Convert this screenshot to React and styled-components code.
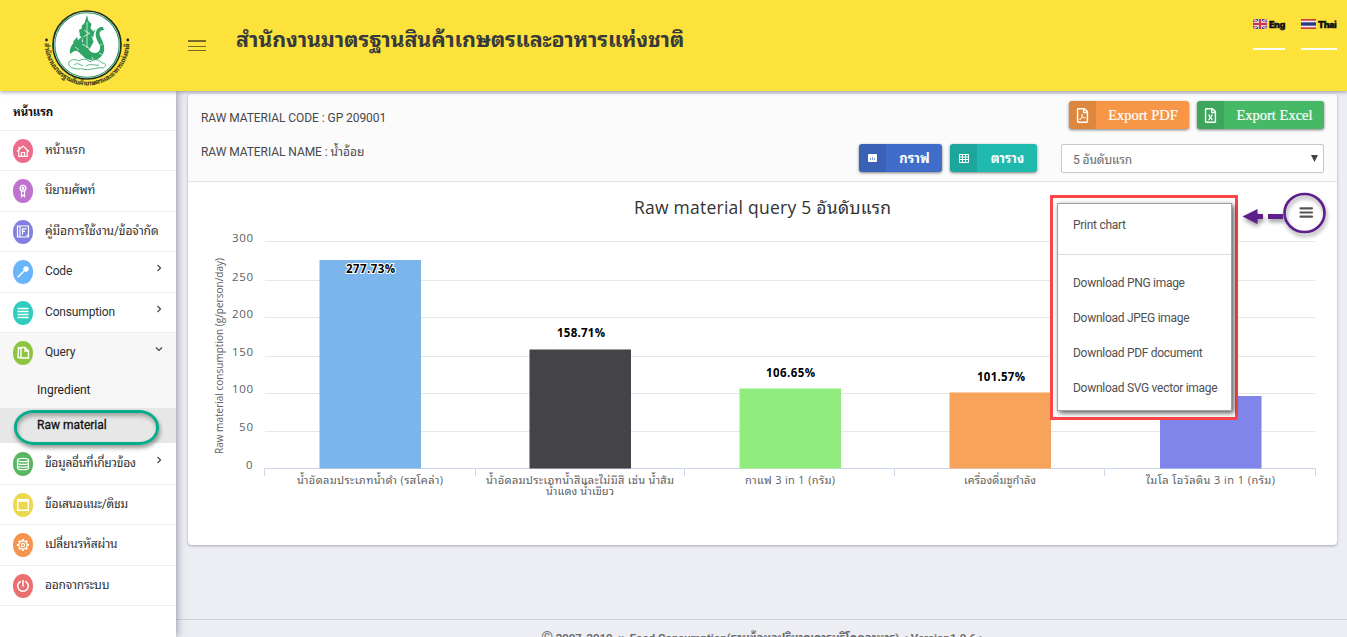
import React from 'react';
import styled, { createGlobalStyle, css } from 'styled-components';
import { FaRegFilePdf, FaRegFileExcel } from 'react-icons/fa';

const thai = '"Noto Sans Thai Looped", Loma, Garuda, Waree, "Noto Serif Thai", "Noto Sans Thai"';

const Global = createGlobalStyle`
  * { box-sizing: border-box; }
  html, body, #root { height: 100%; margin: 0; }
  body { overflow: hidden; background: #edeef4; color: #333; font: 13px Roboto, ${thai}, sans-serif; }
`;

const Page = styled.div`
  height: 637px;
  display: flex;
  flex-direction: column;
  overflow: hidden;
`;
const Header = styled.header`
  flex: none;
  height: 91px;
  display: flex;
  background: #fde23b;
  box-shadow: 0 1px 4px rgba(60, 60, 90, 0.5);
  position: relative;
  z-index: 2;
`;
const LogoBox = styled.div`
  width: 176px;
  padding-left: 37px;
`;
const Burger = styled.div`
  width: 18px;
  height: 11px;
  margin: 40px 0 0 12px;
  display: flex;
  flex-direction: column;
  justify-content: space-between;
`;
const BurgerLine = styled.span`
  height: ${(p) => (p.$thick ? 2 : 1)}px;
  background: #756b22;
`;
const Title = styled.h1`
  margin: 25px 0 0 30px;
  font-size: 21.5px;
  line-height: 30px;
  font-weight: 700;
  letter-spacing: -0.19px;
  white-space: nowrap;
  color: #373a3c;
`;
const Langs = styled.nav`
  margin-left: auto;
  padding: 17px 10px 0 0;
  display: flex;
  gap: 16px;
`;
const Lang = styled.div`
  width: ${(p) => p.$w}px;
  height: 33px;
  display: flex;
  gap: 2px;
  align-items: flex-start;
  border-bottom: 2px solid #fff;
  font: 900 9px/15px Inter, sans-serif;
  color: #111;
  letter-spacing: -0.45px;
  -webkit-text-stroke: 0.4px #111;
  svg { flex: none; margin-top: 2px; }
`;

const Body = styled.div`
  flex: 1;
  min-height: 0;
  display: flex;
`;
const Sidebar = styled.aside`
  width: 176px;
  flex: none;
  background: #fff;
  box-shadow: 1px 0 8px rgba(60, 60, 90, 0.5);
  z-index: 1;
`;
const SideHead = styled.div`
  height: 40px;
  padding: 3px 0 0 13px;
  line-height: 36px;
  font-size: 11.5px;
  font-weight: 700;
  letter-spacing: -0.2px;
  color: #111;
  border-bottom: 1px solid #efefef;
`;
const SideItem = styled.div`
  height: ${(p) => p.$h}px;
  padding: 0 13px;
  display: flex;
  align-items: center;
  background: ${(p) => (p.$open ? '#f7f7f7' : 'none')};
  border-bottom: 1px solid ${(p) => (p.$open ? '#f7f7f7' : '#efefef')};
`;
const Badge = styled.span`
  width: 20px;
  height: 24px;
  flex: none;
  margin-right: 12px;
  border-radius: 10px / 11px;
  background: ${(p) => p.$c};
  display: flex;
  align-items: center;
  justify-content: center;
`;
const SideLabel = styled.span`
  flex: 1;
  font-size: 12px;
  letter-spacing: ${(p) => p.$ls || -0.1}px;
  line-height: 20px;
  padding-bottom: 2px;
  white-space: nowrap;
  color: #2c2f33;
`;
const Chevron = styled.svg`
  width: 8px;
  height: 8px;
  margin: -8px 0 0 0;
  fill: none;
  stroke: #444;
  stroke-width: 1.2;
`;
const SubItem = styled.div`
  position: relative;
  height: 35px;
  padding-left: 37px;
  font-size: 12px;
  line-height: 35px;
  color: #222;
  background: #f7f7f7;
  ${(p) => p.$active && css`
    background: #e7e7e7;
    color: #111;
    -webkit-text-stroke: 0.3px #111;
  `}
`;
const ActiveRing = styled.span`
  position: absolute;
  left: 14px;
  top: 2px;
  width: 145px;
  height: 35px;
  border: 3px solid #06ab8b;
  border-radius: 20px / 17px;
  box-shadow: 1px 3px 4px rgba(0, 0, 0, 0.4), inset 1px 3px 4px rgba(0, 0, 0, 0.3);
  z-index: 2;
`;

const Main = styled.main`
  flex: 1;
  min-width: 0;
  display: flex;
  flex-direction: column;
`;
const Panel = styled.section`
  height: 451px;
  margin: 3px 10px 0 12px;
  background: #fff;
  border-radius: 4px;
  box-shadow: 0 1px 3px rgba(60, 60, 80, 0.4);
`;
const PanelHead = styled.div`
  height: 88px;
  padding: 7px 13px 0;
  display: flex;
  justify-content: space-between;
  background: #fbfbfb;
  border-radius: 4px 4px 0 0;
  border-bottom: 1px solid #e3e3e6;
`;
const Facts = styled.div`
  font-size: 12px;
  line-height: 34px;
  letter-spacing: -0.06px;
  color: #484848;
`;
const Tools = styled.div`
  display: flex;
  flex-direction: column;
  align-items: flex-end;
  gap: 15px;
`;
const ToolRow = styled.div`
  display: flex;
  gap: 8px;
`;
const Button = styled.button`
  width: ${(p) => p.$w}px;
  height: 28px;
  padding: 0;
  display: flex;
  border: 0;
  border-radius: 3px;
  overflow: hidden;
  background: ${(p) => p.$c};
  color: #fff;
  font: ${(p) => (p.$serif ? '14.5px "Liberation Serif", serif' : `bold 13px Roboto, ${thai}, sans-serif`)};
  line-height: ${(p) => (p.$serif ? 28 : 29)}px;
  box-shadow: 0 1px 3px rgba(0, 0, 0, 0.5);
  ${(p) => p.$serif && '-webkit-text-stroke: 0.2px #fff;'}
`;
const ButtonIcon = styled.span`
  width: 27px;
  height: 28px;
  display: flex;
  align-items: center;
  justify-content: center;
  background: rgba(0, 0, 0, 0.1);
`;
const ButtonText = styled.span`
  flex: 1;
  padding-left: 1px;
  text-align: center;
  white-space: nowrap;
`;
const Select = styled.div`
  width: 263px;
  height: 29px;
  margin-left: 16px;
  padding: 0 5px 0 11px;
  display: flex;
  justify-content: space-between;
  background: #fff;
  border: 1px solid #c8c8c8;
  border-radius: 2px;
  font-size: 12px;
  line-height: 30px;
  letter-spacing: -0.1px;
  color: #666;
  svg { margin-top: 10px; }
`;
const ChartArea = styled.div`
  position: relative;
  height: 363px;
`;
const Highlight = styled.div`
  position: absolute;
  left: 862px;
  top: 13px;
  width: 188px;
  height: 225px;
  padding: 5px 3px 5px 4px;
  border: 3px solid #fb4547;
  background: #fff;
`;
const Menu = styled.div`
  height: 208px;
  border: 1px solid #a0a0a0;
  background: #fff;
  box-shadow: 2px 2px 5px rgba(0, 0, 0, 0.65);
  padding-top: 3px;
`;
const MenuItem = styled.div`
  height: 35px;
  padding-left: 15px;
  font-size: 12px;
  line-height: 36px;
  letter-spacing: -0.28px;
  white-space: nowrap;
  color: #505050;
`;
const MenuRule = styled.div`
  height: 1px;
  margin: 12px 0 10px;
  background: #ddd;
`;
const Footer = styled.footer`
  margin-top: auto;
  height: 18px;
  padding: 7px 0 0 3px;
  overflow: hidden;
  border-top: 1px solid #d2d3da;
  text-align: center;
  font-size: 11.4px;
  font-weight: 700;
  line-height: 20px;
  white-space: nowrap;
  color: #6b6b6b;
`;
const Copy = styled.span`
  font-size: 15px;
  font-weight: 400;
`;

const Logo = () => (
  <svg width="100" height="91" viewBox="37 0 100 91">
    <circle cx="87" cy="45" r="34" fill="#fff" stroke="#24301f" strokeWidth="1.7" />
    <circle cx="87" cy="45" r="32.2" fill="none" stroke="#26965a" strokeWidth="1.1" />
    <g fill="#2fa565">
      <path d="M87 15l1.500 6 3 3-1 4 3 4-2 4 2 6-4 7-6-4-1-6-3-4 3-5-1-4 3-3z" />
      <path d="M70 54c-1-6 3-13 9-13 6 0 8 7 12 11 4 2 8 1 9-3 1-4-3-7-4-12-1-5 1-11 7-10l1 3c-4 0-5 3-4 6 3 6 6 12 3 18-3 6-11 8-18 4-4-3-7-8-10-7-2 0-3 2-5 3z" />
      <path d="M73 42l4-5 1 3 4-3v6l-6 4zM79 30l5-3-2 6 3 4-5-2zM95 29l-4 5 2 4z" />
    </g>
    <path d="M87 22v26M84 30l6 4M83 37l7-4M82 44l7 4M75 47l4 3M99 46l3-2M99 53l4 2M92 57l1 3" stroke="#fff" strokeWidth=".7" />
    <path d="M69 62c3-3 7-3 10-1 4-3 8-2 11 1 5-4 10-2 12 1 4 0 5 3 1 5-4-1-8 1-12 1-5 2-8-1-12 0-5 0-12-2-10-7zM74 65c4-3 6 0 9 1M86 66c5-3 9 0 13-1" fill="none" stroke="#55b581" strokeWidth="1" />
    <path id="logo-arc" d="M44.500 40v2a42.500 43.500 0 0 0 85 0v-2" fill="none" />
    <text fontFamily={`Roboto, ${thai}, sans-serif`} fontSize="6.9" fontWeight="700" fill="#3b3812">
      <textPath href="#logo-arc" startOffset="3" textLength="132">สำนักงานมาตรฐานสินค้าเกษตรและอาหารแห่งชาติ</textPath>
    </text>
    <circle cx="46.500" cy="40" r="1.4" fill="#222" />
    <circle cx="127.800" cy="40" r="1.4" fill="#222" />
  </svg>
);

const FlagUK = () => (
  <svg width="14" height="10" viewBox="0 0 14 10">
    <path fill="#35498c" d="M0 0h14v10H0z" />
    <path d="M0 0l14 10M14 0L0 10" stroke="#e8dfe6" strokeWidth="2.2" />
    <path d="M0 0l14 10M14 0L0 10" stroke="#d94450" strokeWidth=".8" />
    <path d="M7 0v10M0 5h14" stroke="#f3e6ea" strokeWidth="3.4" />
    <path d="M7 0v10M0 5h14" stroke="#d33444" strokeWidth="2" />
  </svg>
);
const FlagTH = () => (
  <svg width="15" height="10" viewBox="0 0 15 10">
    <path fill="#cf3b46" d="M0 0h15v10H0z" />
    <path fill="#f2f2f5" d="M0 1.700h15v6.600H0z" />
    <path fill="#2c3a86" d="M0 3.300h15v3.400H0z" />
  </svg>
);

const glyphs = {
  home: <path d="M1 7.500L7 2l6 5.500M2.800 6.500V12.300h8.400V6.500M5.500 12V8.500h3V12M3 5V2.500" />,
  medal: <><circle cx="7" cy="4.300" r="2.900" /><circle cx="7" cy="4.300" r="1" /><path d="M5.500 7v5.500L7 11l1.500 1.500V7" /></>,
  book: <path d="M1.500 1h11v11h-11zM4 1v11M6.500 9.500V3.800h4M6.500 6.300h2.500M10.500 10.300h1.500" />,
  wand: <path strokeWidth="1.500" d="M1.500 12.500l7-7M10 1v6M7 4h6M8 2l4 4M12 2L8 6" />,
  menu: <path strokeWidth="1.700" d="M1.500 2.500h11M1.500 5.500h11M1.500 8.500h11M1.500 11.500h11" />,
  files: <path strokeWidth="1.400" d="M5 1.500h4l3.500 3.500v7H5zM9 1.500V5h3.500M5 3L2.500 1.500l-.5 10L5 12" />,
  db: <><ellipse cx="7" cy="3" rx="5.500" ry="1.700" /><path d="M1.500 3v8c0 2.300 11 2.300 11 0V3M1.500 5.700c0 2.300 11 2.300 11 0M1.500 8.400c0 2.300 11 2.300 11 0" /></>,
  note: <path strokeWidth="1.500" d="M1.700 1.700h10.600v10.600H1.700zM1.700 2.800h10.600M4.500 1v3M7 1v3M9.500 1v3" />,
  gear: <><circle cx="7" cy="7" r="4.200" /><circle cx="7" cy="7" r="1.600" /><path strokeWidth="2" d="M7 1v1.800M7 11.200V13M1 7h1.800M11.200 7H13M2.800 2.800L4 4M10 10l1.200 1.200M11.200 2.800L10 4M4 10l-1.200 1.200" /></>,
  power: <path strokeWidth="1.500" d="M4.800 2.200a5.300 5.300 0 1 0 4.400 0M7 1v6.500" />,
};
const Glyph = ({ name }) => (
  <svg width="14" height="14" viewBox="0 0 14 14" fill="none" stroke="#fff" strokeWidth="1.200">{glyphs[name]}</svg>
);

const before = [
  ['หน้าแรก', 'home', '#ec6c8b', 40],
  ['นิยามศัพท์', 'medal', '#bf73cf', 41, null, -0.2],
  ['คู่มือการใช้งาน/ข้อจำกัด', 'book', '#817fe0', 40],
  ['Code', 'wand', '#69b5fb', 41, 'right', -0.15],
  ['Consumption', 'menu', '#30ccbd', 40, 'right', -0.15],
  ['Query', 'files', '#8cc63e', 40, 'down', -0.15],
];
const after = [
  ['ข้อมูลอื่นที่เกี่ยวข้อง', 'db', '#58b760', 42, 'right', -0.3],
  ['ข้อเสนอแนะ/ติชม', 'note', '#ecd84c', 40, null, -0.2],
  ['เปลี่ยนรหัสผ่าน', 'gear', '#f69450', 41, null, -0.15],
  ['ออกจากระบบ', 'power', '#e9706f', 40, null, -0.2],
];
const NavItem = ({ item: [label, icon, color, h, arrow, ls] }) => (
  <SideItem $h={h} $open={arrow === 'down'}>
    <Badge $c={color}><Glyph name={icon} /></Badge>
    <SideLabel $ls={ls}>{label}</SideLabel>
    {arrow && <Chevron viewBox="0 0 8 8"><path d={arrow === 'down' ? 'M1 2.500l3 3 3-3' : 'M2.500 1l3 3-3 3'} /></Chevron>}
  </SideItem>
);

const grid = [[300, 241.5, 242], [250, 280.5, 281], [200, 317.5, 318], [150, 356.5, 356], [100, 393.5, 393], [50, 431.5, 431], [0, 468.5, 469]];
const bars = [
  [319.5, 260, '#7cb5ec', '277.73%', 346, 273, 49],
  [529.5, 349.5, '#434348', '158.71%', 557, 337, 48],
  [739.5, 388.5, '#90ed7d', '106.65%', 766, 377, 49],
  [949.5, 392.5, '#f7a35c', '101.57%', 977, 381, 48],
  [1160, 396, '#8085e9', '', 0, 0, 0],
];
const cats = [
  [297, 484, 146, 'น้ำอัดลมประเภทน้ำดำ (รสโคล่า)'],
  [486, 484, 188, 'น้ำอัดลมประเภทน้ำสีและไม่มีสี เช่น น้ำส้ม'],
  [546, 495, 68, 'น้ำแดง น้ำเขียว'],
  [745, 484, 90, 'กาแฟ 3 in 1 (กรัม)'],
  [964, 484, 72, 'เครื่องดื่มชูกำลัง'],
  [1146, 484, 129, 'ไมโล โอวัลติน 3 in 1 (กรัม)'],
];

const ChartSvg = styled.svg`
  display: block;
  font-family: "Open Sans", ${thai}, sans-serif;
`;
const Callout = styled.g`
  filter: drop-shadow(1px 3px 2px rgba(0, 0, 0, 0.4));
`;

const Chart = () => (
  <ChartSvg width="1149" height="363" viewBox="188 182 1149 363">
    <text x="634" y="214" fontSize="17.500" textLength="257" fill="#333">Raw material query 5 อันดับแรก</text>
    {grid.map(([v, y, b]) => (
      <g key={v}>
        <path d={`M265 ${y}H1315`} stroke={v ? '#e6e6e6' : '#ccd6eb'} />
        <text x={v >= 100 ? 232 : v ? 239 : 246} y={b} textLength={v >= 100 ? 21 : v ? 14 : 7} fontSize="11.500" fill="#606060">{v}</text>
      </g>
    ))}
    <path d="M264.500 468v8M475.500 468v8M684.500 468v8M894.500 468v8M1104.500 468v8M1315.500 468v8" stroke="#ccd6eb" />
    <text transform="translate(222.500 454) rotate(-90)" fontSize="10" textLength="196" fill="#606060">Raw material consumption (g/person/day)</text>
    {bars.map(([x, y, c, t, tx, ty, w]) => (
      <g key={x}>
        <rect x={x} y={y} width="101.500" height={468.5 - y} fill={c} />
        {t && <text x={tx} y={ty} textLength={w} fontSize="11.500" fontWeight="700" fill="#000" stroke="#fff" strokeWidth="2" paintOrder="stroke">{t}</text>}
      </g>
    ))}
    {cats.map(([x, y, w, t]) => (
      <text key={t} x={x} y={y} textLength={w} fontSize="11" fill="#606060">{t}</text>
    ))}
    <Callout>
      <ellipse cx="1304.500" cy="213" rx="20" ry="19" fill="none" stroke="#5e1f8c" strokeWidth="2.600" />
      <path d="M1242.500 216.500l15-7.500v5h5.500v5h-5.500v5zM1268 214h15v5h-15z" fill="#5e1f8c" />
    </Callout>
    <path d="M1300.500 208.300h11.500M1300.500 212.500h11.500M1300.500 216.700h11.500" stroke="#555" strokeWidth="2.200" strokeLinecap="round" />
  </ChartSvg>
);

export default function App() {
  return (
    <Page>
      <Global />
      <Header>
        <LogoBox><Logo /></LogoBox>
        <Burger><BurgerLine $thick /><BurgerLine /><BurgerLine /></Burger>
        <Title>สำนักงานมาตรฐานสินค้าเกษตรและอาหารแห่งชาติ</Title>
        <Langs>
          <Lang $w={32}><FlagUK />Eng</Lang>
          <Lang $w={36}><FlagTH />Thai</Lang>
        </Langs>
      </Header>
      <Body>
        <Sidebar>
          <SideHead>หน้าแรก</SideHead>
          {before.map((i) => <NavItem key={i[0]} item={i} />)}
          <SubItem>Ingredient</SubItem>
          <SubItem $active>Raw material<ActiveRing /></SubItem>
          {after.map((i) => <NavItem key={i[0]} item={i} />)}
        </Sidebar>
        <Main>
          <Panel>
            <PanelHead>
              <Facts>
                <div>RAW MATERIAL CODE : GP 209001</div>
                <div>RAW MATERIAL NAME : น้ำอ้อย</div>
              </Facts>
              <Tools>
                <ToolRow>
                  <Button $w={120} $c="#f79646" $serif><ButtonIcon><FaRegFilePdf size={15} /></ButtonIcon><ButtonText>Export PDF</ButtonText></Button>
                  <Button $w={127} $c="#45b966" $serif><ButtonIcon><FaRegFileExcel size={15} /></ButtonIcon><ButtonText>Export Excel</ButtonText></Button>
                </ToolRow>
                <ToolRow>
                  <Button $w={83} $c="#406dca"><ButtonIcon>
                    <svg width="9" height="8"><rect width="9" height="8" rx="1" fill="#fff" /><path d="M2.500 6V4M4.500 6V3M6.500 6V4" stroke="#7f9bd6" /></svg>
                  </ButtonIcon><ButtonText>กราฟ</ButtonText></Button>
                  <Button $w={87} $c="#20b9ae"><ButtonIcon>
                    <svg width="10" height="9" fill="none" stroke="#fff"><path d="M.5.5h9v8h-9zM.5 3h9M.5 5.500h9M3.500.500v8M6.500.500v8" /></svg>
                  </ButtonIcon><ButtonText>ตาราง</ButtonText></Button>
                  <Select>5 อันดับแรก<svg width="7" height="7"><path d="M0 0h7L3.500 7z" fill="#444" /></svg></Select>
                </ToolRow>
              </Tools>
            </PanelHead>
            <ChartArea>
              <Chart />
              <Highlight>
                <Menu>
                  <MenuItem>Print chart</MenuItem>
                  <MenuRule />
                  <MenuItem>Download PNG image</MenuItem>
                  <MenuItem>Download JPEG image</MenuItem>
                  <MenuItem>Download PDF document</MenuItem>
                  <MenuItem>Download SVG vector image</MenuItem>
                </Menu>
              </Highlight>
            </ChartArea>
          </Panel>
          <Footer><Copy>©</Copy> 2007-2010 &lt;&gt; Food Consumption(ฐานข้อมูลปริมาณการบริโภคอาหาร) &lt; Version1.0.6 &gt;</Footer>
        </Main>
      </Body>
    </Page>
  );
}
